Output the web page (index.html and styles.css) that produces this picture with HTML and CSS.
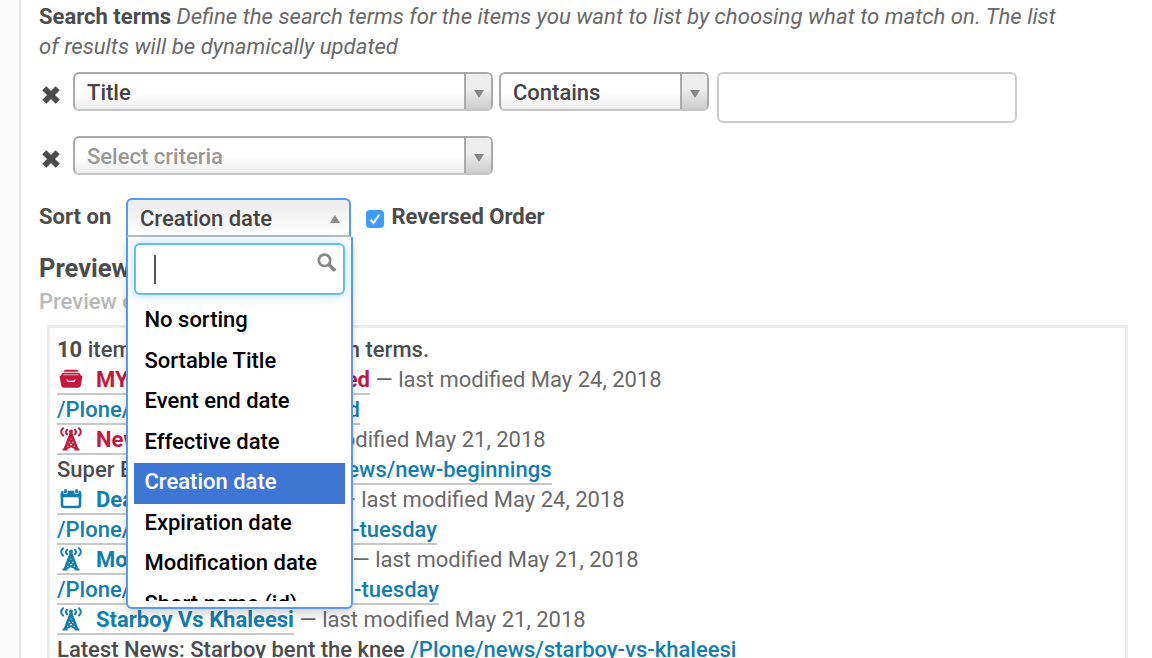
FILE: index.html
```html
<!DOCTYPE html>
<html lang="en">
<head>
<meta charset="utf-8">
<title>Collection</title>
<link rel="stylesheet" href="styles.css">
</head>
<body>
<svg class="defs" width="0" height="0">
  <symbol id="tower" viewBox="0 0 22 24">
    <g fill="none" stroke="currentColor" stroke-linecap="round">
      <path d="M3 1.200C.6 3.400.6 6.400 3 8.600M19 1.200C21.400 3.400 21.400 6.400 19 8.600" stroke-width="2"/>
      <path d="M7 2.800C5.700 4.200 5.700 5.800 7 7.200M15 2.800C16.300 4.200 16.300 5.800 15 7.200" stroke-width="2"/>
    </g>
    <circle cx="11" cy="4.500" r="2" fill="currentColor"/>
    <path d="M10 5h2l1.600 4L18.300 21.500H19.500V23.500H14.500V22L11 20.300L7.500 22V23.500H2.500V21.500H3.700L8.400 9z" fill="currentColor"/>
    <path d="M10.400 11.800h1.200l-.6 1.200zM9 14.600l1.200.8-1.600 1zM13 14.600l-1.200.8 1.600 1zM11 16.700l1.400.9-1.400.9-1.400-.9zM7.500 18.600l1.300.6-1.800 1zM14.500 18.600l-1.300.6 1.800 1z" fill="#fff"/>
  </symbol>
  <symbol id="cross" viewBox="0 0 20 20">
    <path d="M3.300 3.300L16.700 16.700M16.700 3.300L3.300 16.700" stroke="currentColor" stroke-width="5.800"/>
  </symbol>
</svg>
<div class="page">
  <p class="intro"><b>Search terms</b> <i>Define the search terms for the items you want to list by choosing what to match on. The list<br>of results will be dynamically updated</i></p>

  <div class="criteria">
    <svg class="remove"><use href="#cross"/></svg>
    <div class="select wide"><span>Title</span><span class="arrow"><svg width="10" height="8"><path d="M0 0H10L5 8z"/></svg></span></div>
    <div class="select medium"><span>Contains</span><span class="arrow"><svg width="10" height="8"><path d="M0 0H10L5 8z"/></svg></span></div>
    <input class="value" type="text">
  </div>
  <div class="criteria">
    <svg class="remove"><use href="#cross"/></svg>
    <div class="select wide empty"><span>Select criteria</span><span class="arrow"><svg width="10" height="8"><path d="M0 0H10L5 8z"/></svg></span></div>
  </div>

  <div class="sorting">
    <b class="sort-label">Sort on</b>
    <div class="sort">
      <div class="sort-choice"><span>Creation date</span><svg width="10" height="8"><path d="M0 8H10L5 0z"/></svg></div>
      <div class="drop">
        <div class="search">
          <span class="caret"></span>
          <svg class="lens" width="20" height="20" viewBox="0 0 20 20"><circle cx="7.500" cy="7.300" r="5.700" fill="none" stroke="#888" stroke-width="2.700"/><path d="M11.800 11.600L18.300 17.800" stroke="#888" stroke-width="3.600"/></svg>
        </div>
        <ul class="options">
          <li>No sorting</li>
          <li>Sortable Title</li>
          <li>Event end date</li>
          <li>Effective date</li>
          <li class="active">Creation date</li>
          <li>Expiration date</li>
          <li>Modification date</li>
          <li>Short name (id)</li>
        </ul>
      </div>
    </div>
    <span class="check"><svg width="18" height="18" viewBox="0 0 18 18"><path d="M4.500 9.800L7.500 13L13.200 4.800" fill="none" stroke="#fff" stroke-width="2"/></svg></span>
    <b class="reversed">Reversed Order</b>
  </div>

  <h2 class="preview-title">Preview</h2>
  <p class="preview-help">Preview of</p>

  <div class="results">
    <div class="row"><div class="split w-count"><span><b>10</b> items</span><span>search terms.</span></div></div>
    <div class="row"><a class="split item private w-1"><svg class="icon folder" viewBox="0 0 24 20"><path d="M4.500 2.700Q5 .8 6.500 .8H17.500Q19 .8 19.500 2.700z" fill="currentColor"/><path d="M1.800 7.500Q2.400 3.700 5 3.700H19Q21.600 3.700 22.200 7.500z" fill="currentColor"/><path d="M4.500 5.800H19.500" stroke="#fff" stroke-width=".7"/><path d="M.5 6.800H23.500L21.800 16.500Q21.300 18.800 19 18.800H5Q2.700 18.800 2.200 16.500z" fill="currentColor"/><path d="M8.200 10.500V11Q8.200 12.300 9.500 12.300H14.500Q15.800 12.300 15.800 11V10.500" fill="none" stroke="#fff" stroke-width="1.200"/></svg><span>MY</span><span class="tail">ed</span></a><span class="meta">— last modified May 24, 2018</span></div>
    <div class="row"><a class="split w-2"><span>/Plone/</span><span>d</span></a></div>
    <div class="row"><a class="split item private w-3"><svg class="icon"><use href="#tower"/></svg><span>New</span></a><span class="meta">— last modified May 21, 2018</span></div>
    <div class="row"><span class="lead">Super B</span><a class="split w-4"><span></span><span>/Plone/news/new-beginnings</span></a></div>
    <div class="row"><a class="split item w-5"><svg class="icon calendar" viewBox="0 0 22 20"><path d="M2 5V16Q2 18 4 18H18Q20 18 20 16V5" fill="none" stroke="currentColor" stroke-width="2.600"/><path d="M.7 8.200V4Q.7 1.800 2.700 1.800H19.300Q21.300 1.800 21.300 4V8.200z" fill="currentColor"/><path d="M3.800 1V4.400H7.200V1M14.800 1V4.400H18.200V1" fill="none" stroke="#fff" stroke-width=".8"/><path d="M5.500 .3V3.600M16.500 .3V3.600" stroke="currentColor" stroke-width="2.500"/></svg><span>Dead</span></a><span class="meta">— last modified May 24, 2018</span></div>
    <div class="row"><a class="split w-6"><span>/Plone/</span><span>-tuesday</span></a></div>
    <div class="row"><a class="split item w-7"><svg class="icon"><use href="#tower"/></svg><span>Mo</span></a><span class="meta">— last modified May 21, 2018</span></div>
    <div class="row"><a class="split w-8"><span>/Plone/</span><span>-tuesday</span></a></div>
    <div class="row"><a class="split item w-9"><svg class="icon"><use href="#tower"/></svg><span>Starboy Vs Khaleesi</span></a><span class="meta">— last modified May 21, 2018</span></div>
    <div class="row"><span class="desc">Latest News: Starboy bent the knee</span><a>/Plone/news/starboy-vs-khaleesi</a></div>
  </div>
</div>
</body>
</html>
```
FILE: styles.css
```css
* { box-sizing: border-box; }
body {
  margin: 0;
  height: 658px;
  overflow: hidden;
  background: #fafafa;
  font: 500 22px/30px Roboto, sans-serif;
  color: #4c4c4c;
}
.defs { position: absolute; }
.page {
  margin-left: 19px;
  height: 658px;
  overflow: hidden;
  border-left: 2px solid #e5e5e5;
  background: #fff;
  padding: 2px 24px 0 18px;
}
.intro { margin: 0 0 10px; height: 60px; white-space: nowrap; }
.intro i { font-size: 22.180px; line-height: 28px; font-weight: 400; color: #696969; }

.criteria { display: flex; height: 64px; align-items: flex-start; }
.remove { width: 20px; height: 20px; margin: 13px 11.800px 0 2.200px; flex: none; color: #4c4c4c; }
.select {
  display: flex;
  justify-content: space-between;
  height: 39px;
  border: 2px solid #aaa;
  border-bottom-color: #c4c4c4;
  border-radius: 6px;
  background: linear-gradient(#fff 50%, #eee);
  padding-left: 12px;
  line-height: 37px;
  color: #444;
  overflow: hidden;
}
.wide { width: 420px; }
.medium { width: 210px; margin: 0 8px 0 6px; }
.empty { color: #999; }
.arrow {
  width: 27px;
  border-left: 2px solid #aaa;
  background: linear-gradient(#eee 40%, #ccc);
  padding: 16px 0 0 8px;
  line-height: 0;
  fill: #888;
}
.value {
  width: 300px;
  height: 51px;
  border: 2px solid #ccc;
  border-radius: 6px;
  background: #fff;
}

.sorting { display: flex; height: 54px; margin-top: -2px; }
.sort-label { width: 87px; padding-top: 4px; }
.sort { position: relative; width: 225px; height: 39px; }
.sort-choice {
  display: flex;
  justify-content: space-between;
  height: 39px;
  border: 2px solid #5897fb;
  border-bottom-color: #bbb;
  border-radius: 6px 6px 0 0;
  background: linear-gradient(#eee 20%, #fff);
  padding: 0 9px 0 12px;
  line-height: 37px;
  color: #444;
}
.sort-choice svg { margin-top: 15px; fill: #888; }
.drop {
  position: absolute;
  z-index: 1;
  left: 0;
  top: 39px;
  width: 227px;
  height: 372px;
  border: 2px solid #5897fb;
  border-top: 0;
  border-radius: 0 0 6px 6px;
  background: #fff;
  box-shadow: 0 6px 8px rgba(0, 0, 0, .15);
  padding: 6px;
  color: #000;
}
.search {
  display: flex;
  justify-content: space-between;
  height: 52px;
  border: 2px solid #66bde6;
  border-radius: 6px;
  box-shadow: 0 0 12px rgba(102, 189, 230, .5);
  padding: 8px 6px 0 18px;
}
.caret { width: 2px; height: 29px; margin-top: 2px; background: #555; }
.options {
  list-style: none;
  height: 300px;
  margin: 6px 0 0;
  padding: 0;
  overflow: hidden;
}
.options li { height: 40.500px; padding-left: 10.500px; line-height: 38px; }
.options .active { background: #3d77d3; color: #fff; }
.check {
  width: 18px;
  height: 18px;
  margin: 12px 7.500px 0 15px;
  border-radius: 4px;
  background: #3f9bfb;
  line-height: 0;
}
.reversed { padding-top: 4px; }

.preview-title { margin: -1px 0 0; font: 700 25.500px/34px Roboto, sans-serif; }
.preview-help { margin: 2px 0 8px; color: #b8b8b8; }

.results {
  width: 1081px;
  margin-left: 8px;
  border: 3px solid #ededed;
  padding: 7px;
}
.row { display: flex; height: 30px; white-space: nowrap; }
.row a { height: 30px; border-bottom: 2px solid #c8c8c8; color: #147db0; }
.split { display: flex; justify-content: space-between; }
.split.item { justify-content: flex-start; font-weight: 700; }
.row a.private { color: #c4183c; }
.tail { margin-left: auto; }
.icon { width: 22px; height: 24px; margin: 2px 14px 0 3px; flex: none; }
.folder { width: 24px; height: 20px; margin: 4px 13px 0 2px; }
.calendar { height: 20px; margin-top: 4px; }
.meta { margin-left: 5.500px; font-weight: 400; color: #696969; }
.lead { width: 180px; }
.desc { margin-right: 5.500px; }
.w-count { width: 372px; }
.w-1 { width: 313px; }
.w-2 { width: 303px; }
.w-3 { width: 197px; }
.w-4 { width: 314.500px; }
.w-5 { width: 276px; }
.w-6 { width: 380px; }
.w-7 { width: 290px; }
.w-8 { width: 382px; }
.w-9 { width: 237px; }
```
